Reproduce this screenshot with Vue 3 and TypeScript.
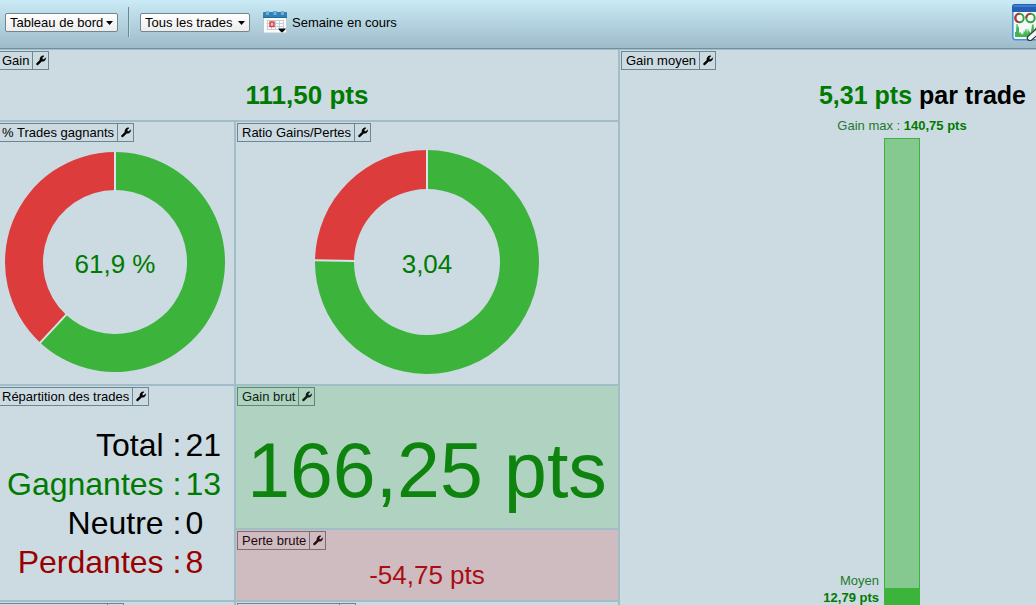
<script setup lang="ts">
import { computed, ref } from 'vue'

interface Ring {
  share: number
  radius: number
  hole: number
}

const board = ref('Tableau de bord')
const filter = ref('Tous les trades')

const rows = [
  { label: 'Total :', value: '21', tone: 'neutral' },
  { label: 'Gagnantes :', value: '13', tone: 'gain' },
  { label: 'Neutre :', value: '0', tone: 'neutral' },
  { label: 'Perdantes :', value: '8', tone: 'loss' },
]

const winRing: Ring = { share: 0.619, radius: 110, hole: 72 }
const ratioRing: Ring = { share: 3.04 / 4.04, radius: 112, hole: 73 }

function point(r: number, share: number): string {
  const a = share * 2 * Math.PI
  return `${(Math.sin(a) * r).toFixed(2)} ${(-Math.cos(a) * r).toFixed(2)}`
}

function arc(ring: Ring, from: number, to: number): string {
  const large = to - from > 0.5 ? 1 : 0
  return (
    `M${point(ring.radius, from)}A${ring.radius} ${ring.radius} 0 ${large} 1 ${point(ring.radius, to)}` +
    `L${point(ring.hole, to)}A${ring.hole} ${ring.hole} 0 ${large} 0 ${point(ring.hole, from)}Z`
  )
}

function cuts(ring: Ring): string {
  return (
    `M${point(ring.hole - 1, 0)}L${point(ring.radius + 1, 0)}` +
    `M${point(ring.hole - 1, ring.share)}L${point(ring.radius + 1, ring.share)}`
  )
}

const rings = computed(() => [
  { title: '% Trades gagnants', text: '61,9 %', ring: winRing },
  { title: 'Ratio Gains/Pertes', text: '3,04', ring: ratioRing },
])

const maxGain = 140.75
const averageGain = 12.79
const averageHeight = computed(() => `${(averageGain / maxGain) * 100}%`)

const wrench =
  'M10.6 1.1 8.4 3.3 8.7 5 10.4 5.3 12.4 3.2C12.9 5.2 11.6 7.2 9.4 7.4L8 7.3 3.6 11.6C2.6 12.4 1 11.2 1.7 10L5.8 6C5.2 3.2 7.6.4 10.6 1.1Z'
</script>

<template>
  <div class="page">
    <header class="toolbar">
      <span class="pick">
        <select v-model="board" aria-label="Vue">
          <option>Tableau de bord</option>
        </select>
        <svg class="arrow" viewBox="0 0 7 4" aria-hidden="true"><path d="M0 0H7L3.5 4Z" /></svg>
      </span>
      <span class="divider"></span>
      <span class="pick">
        <select v-model="filter" aria-label="Filtre">
          <option>Tous les trades</option>
        </select>
        <svg class="arrow" viewBox="0 0 7 4" aria-hidden="true"><path d="M0 0H7L3.5 4Z" /></svg>
      </span>
      <button type="button" class="period">
        <svg width="24" height="23" viewBox="0 0 24 23" aria-hidden="true">
          <rect x=".5" y="4.500" width="23" height="17.500" fill="#fbfcfd" stroke="#bccad2" />
          <path d="M0 2Q0 1 1 1H3V0H6V1H10V0H14V1H18V0H21V1H23Q24 1 24 2V7H0Z" fill="#3380b4" />
          <path d="M3 0H6V4H3ZM10.500 0H13.500V4H10.500ZM18 0H21V4H18Z" fill="#6eb2d8" />
          <path d="M0 6.500H24" stroke="#23689c" />
          <path d="M3.500 9.500H20.500M3.500 12.500H20.500M3.500 15.500H20.500M3.500 18.500H15M4.500 9V19M8.500 9V19M12.500 9V19M16.500 9V17M20.500 9V17" stroke="#c3ced6" fill="none" />
          <rect x="7" y="11" width="4" height="4.500" fill="#f7b8b4" stroke="#e0393c" stroke-width="1.400" />
          <path d="M15 17.500H23L21 20 19 21.500 17 20Z" fill="#000" />
        </svg>
        <span>Semaine en cours</span>
      </button>
      <button type="button" class="edit" aria-label="Modifier">
        <svg width="24" height="37" viewBox="0 0 24 37" aria-hidden="true">
          <rect x=".8" y=".8" width="34" height="35" rx="3" fill="#f4faf8" stroke="#4b92d8" stroke-width="1.600" />
          <path d="M0 8V3Q0 0 3 0H24V8Z" fill="#2561b5" />
          <path d="M1 3Q1 1 3 1H24V3Z" fill="#3f7fce" />
          <circle cx="7.500" cy="14" r="4.200" fill="none" stroke="#2fa245" stroke-width="2" />
          <path d="M7.500 18.200A4.200 4.200 0 1 1 7.500 9.800" fill="none" stroke="#bd2f30" stroke-width="2" />
          <circle cx="18.500" cy="14" r="4.200" fill="none" stroke="#2fa245" stroke-width="2" />
          <path d="M18.500 9.800A4.200 4.200 0 0 0 14.300 14" fill="none" stroke="#bd2f30" stroke-width="2" />
          <path d="M3 33V28L4 28 4.500 20H5.500L6 24 7 22V29L8.500 28 9 31 10 29 11 31 12 26 13 29 13.500 25 14.500 25 15 30 16 24 17 28 18 27 18.500 30 20 21 21.500 20 22 26 24 23V33Z" fill="#41b64f" />
          <path d="M18 34 26 27" stroke="#333b40" stroke-width="6.500" stroke-linecap="round" />
          <path d="M18 34 26 27" stroke="#f3f5f6" stroke-width="4" stroke-linecap="round" />
        </svg>
      </button>
    </header>

    <main class="board">
      <section class="cell total">
        <div class="tag">
          <h2>Gain</h2>
          <button type="button" aria-label="Configurer Gain"><svg viewBox="0 0 14 13"><path :d="wrench" /></svg></button>
        </div>
        <p class="body headline gain">111,50 pts</p>
      </section>

      <section v-for="item in rings" :key="item.title" class="cell">
        <div class="tag">
          <h2>{{ item.title }}</h2>
          <button type="button" :aria-label="`Configurer ${item.title}`"><svg viewBox="0 0 14 13"><path :d="wrench" /></svg></button>
        </div>
        <div class="body ring">
          <svg
            :width="item.ring.radius * 2"
            :height="item.ring.radius * 2"
            :viewBox="`${-item.ring.radius} ${-item.ring.radius} ${item.ring.radius * 2} ${item.ring.radius * 2}`"
            aria-hidden="true"
          >
            <path :d="arc(item.ring, 0, item.ring.share)" fill="#3cb43c" />
            <path :d="arc(item.ring, item.ring.share, 1)" fill="#dd3c3c" />
            <path :d="cuts(item.ring)" stroke="#d7e3e6" stroke-width="2" />
          </svg>
          <span class="figure gain">{{ item.text }}</span>
        </div>
      </section>

      <section class="cell split">
        <div class="tag">
          <h2>Répartition des trades</h2>
          <button type="button" aria-label="Configurer Répartition des trades"><svg viewBox="0 0 14 13"><path :d="wrench" /></svg></button>
        </div>
        <div class="body">
          <table>
            <tbody>
              <tr v-for="row in rows" :key="row.label" :class="row.tone">
                <th scope="row">{{ row.label }}</th>
                <td>{{ row.value }}</td>
              </tr>
            </tbody>
          </table>
        </div>
      </section>

      <section class="cell gross-gain">
        <div class="tag">
          <h2>Gain brut</h2>
          <button type="button" aria-label="Configurer Gain brut"><svg viewBox="0 0 14 13"><path :d="wrench" /></svg></button>
        </div>
        <p class="body">166,25 pts</p>
      </section>

      <section class="cell gross-loss">
        <div class="tag">
          <h2>Perte brute</h2>
          <button type="button" aria-label="Configurer Perte brute"><svg viewBox="0 0 14 13"><path :d="wrench" /></svg></button>
        </div>
        <p class="body">-54,75 pts</p>
      </section>

      <div class="cell" aria-hidden="true"><div class="tag stub wide"><span></span></div></div>
      <div class="cell" aria-hidden="true"><div class="tag stub"><span></span></div></div>

      <section class="cell average">
        <div class="tag">
          <h2>Gain moyen</h2>
          <button type="button" aria-label="Configurer Gain moyen"><svg viewBox="0 0 14 13"><path :d="wrench" /></svg></button>
        </div>
        <p class="headline"><span class="gain">5,31 pts</span> par trade</p>
        <div class="scale">
          <p class="max">Gain max : <strong>140,75 pts</strong></p>
          <p class="mean">Moyen<br /><strong>12,79 pts</strong></p>
          <div class="bar"><div class="fill" :style="{ height: averageHeight }"></div></div>
        </div>
      </section>
    </main>
  </div>
</template>

<style>
body {
  margin: 0;
  overflow: hidden;
}
</style>

<style scoped>
.page {
  display: flex;
  flex-direction: column;
  height: 100vh;
  overflow: hidden;
  background: #ccdbe2;
  color: #000;
  font: 13px/17px "Liberation Sans", Arial, sans-serif;
}

.page * {
  box-sizing: border-box;
}

h2,
p {
  margin: 0;
  font: inherit;
}

button,
select {
  margin: 0;
  border: 0;
  background: none;
  color: inherit;
  font: inherit;
}

.toolbar {
  display: flex;
  flex: none;
  align-items: center;
  height: 49px;
  padding: 0 0 4px 5px;
  border-bottom: 1px solid #6f8f9d;
  background: linear-gradient(#caeaf6, #9dbbc8);
}

.pick {
  position: relative;
  display: flex;
  min-width: 110px;
  height: 19px;
  border: 1px solid #71868f;
  border-radius: 2px;
  background: linear-gradient(#fff, #ececec);
}

.pick select {
  flex: 1;
  padding: 0 13px 0 4px;
  appearance: none;
  line-height: 17px;
}

.arrow {
  position: absolute;
  top: 7px;
  right: 4px;
  width: 7px;
  height: 4px;
  pointer-events: none;
}

.divider {
  width: 2px;
  height: 30px;
  margin: 0 10px;
  border-left: 1px solid #688896;
  border-right: 1px solid #c5dde6;
}

.period {
  display: flex;
  align-items: center;
  gap: 5px;
  margin-left: 13px;
  padding: 0;
}

.edit {
  margin-left: auto;
  padding: 0;
  line-height: 0;
}

.board {
  display: grid;
  flex: 1;
  grid-template-columns: 238fr 382fr 416fr;
  grid-template-rows: 70px 262px 142px 70px 60px;
  gap: 2px;
  min-height: 0;
  margin-left: -4px;
  padding-top: 1px;
  background: #a0bdc8;
}

.cell {
  display: flex;
  flex-direction: column;
  min-width: 0;
  background: #ccdbe2;
}

.total {
  grid-column: 1 / 3;
}

.split {
  grid-row: 3 / 5;
  grid-column: 1;
}

.average {
  grid-row: 1 / 6;
  grid-column: 3;
}

.tag {
  display: flex;
  flex: none;
  align-self: flex-start;
  height: 19px;
  margin: 1px 0 0 1px;
  border: 1px solid #6c8792;
}

.tag h2 {
  padding: 0 3px 0 4px;
  white-space: nowrap;
}

.tag button {
  display: flex;
  align-items: center;
  justify-content: center;
  width: 16px;
  padding: 0;
  border-left: 1px solid #6c8792;
}

.tag button svg {
  width: 12px;
  height: 11px;
  fill: currentColor;
  stroke: currentColor;
  stroke-width: 0.5;
}

.stub {
  width: 119px;
  padding-right: 15px;
}

.wide {
  width: 127px;
}

.stub span {
  flex: 1;
  border-right: 1px solid #6c8792;
}

.body {
  display: flex;
  flex: 1;
  align-items: center;
  justify-content: center;
}

.headline {
  font-size: 26px;
  font-weight: bold;
  line-height: 50px;
}

.gain {
  color: #007a00;
}

.loss {
  color: #990000;
}

.ring {
  display: grid;
  place-items: center;
  place-content: center;
  padding-bottom: 2px;
}

.ring > * {
  grid-area: 1 / 1;
}

.figure {
  padding-top: 3px;
  font-size: 26px;
  line-height: 30px;
}

.split .body {
  padding: 2px 2px 0 0;
}

table {
  border-collapse: collapse;
  font-size: 32px;
  line-height: 39px;
}

th {
  padding: 0;
  font-weight: normal;
  text-align: right;
}

td {
  padding: 0 0 0 4px;
}

.gross-gain {
  background: #afd3c0;
  color: #0e840e;
}

.gross-gain .tag,
.gross-gain .tag button {
  border-color: #5d8873;
  color: #0c1d14;
}

.gross-gain .body {
  padding-top: 6px;
  font-size: 77px;
  line-height: 90px;
}

.gross-loss {
  background: #cfbcc1;
  color: #a80e12;
}

.gross-loss .tag,
.gross-loss .tag button {
  border-color: #836b76;
  color: #22090f;
}

.gross-loss .body {
  font-size: 26px;
  line-height: 30px;
}

.average .headline {
  height: 48px;
  padding-right: 10px;
  font-size: 25px;
  text-align: right;
}

.scale {
  display: grid;
  grid-template-columns: 1fr 36px 1fr;
  grid-template-rows: 16px 496px;
  row-gap: 4px;
  align-self: flex-end;
  width: 268px;
  color: #1c7a2c;
}

.scale strong {
  color: #007a00;
}

.max {
  grid-column: 1 / 4;
  line-height: 16px;
  text-align: center;
}

.mean {
  align-self: end;
  padding: 0 5px 28px 0;
  text-align: right;
}

.bar {
  display: flex;
  align-items: flex-end;
  border: 1px solid #3cb43c;
  background: #86c990;
}

.fill {
  width: 100%;
  background: #3cb43c;
}
</style>
